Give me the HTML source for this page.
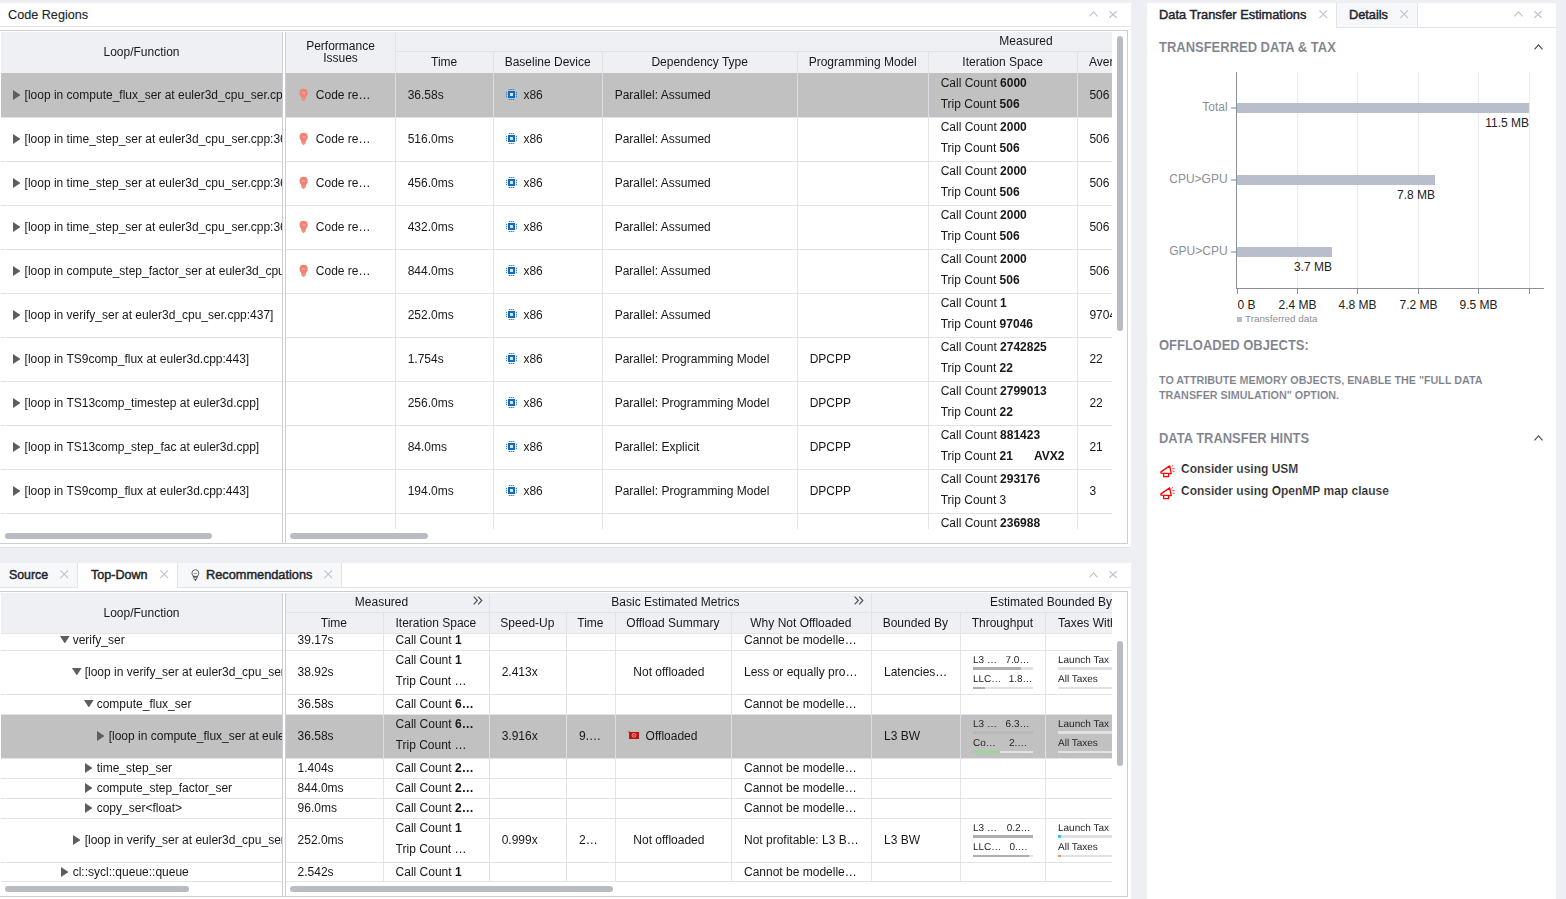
<!DOCTYPE html><html><head><meta charset="utf-8"><title>Advisor</title><style>
*{box-sizing:border-box;margin:0;padding:0}
html,body{width:1566px;height:899px;overflow:hidden;background:#edeff3;}
body{font-family:"Liberation Sans",sans-serif;font-size:12px;color:#181818;position:relative;line-height:1}
.a{position:absolute;white-space:nowrap;overflow:hidden}
.v{position:absolute;white-space:nowrap;overflow:visible}
.c{text-align:center}
.r{text-align:right}
b{font-weight:700}
.pan{position:absolute;background:#fff;overflow:hidden}
.ttl{font-weight:400;font-size:13px;color:#20232a;-webkit-text-stroke:0.45px #20232a;transform-origin:0 50%;overflow:visible}
.sec{font-weight:700;color:#7c808b;transform-origin:0 50%;overflow:visible;-webkit-text-stroke:0.12px #fff}
.g{position:absolute;will-change:transform;overflow:hidden;background:#fff}
  .s{font-size:10px;color:#242424;text-rendering:geometricPrecision}
svg{position:absolute;overflow:visible}
</style></head><body>
<div class="pan" style="left:0;top:3px;width:1131px;height:544px">
<div class="v ttl" style="left:8.2px;top:0px;height:24px;line-height:24px;font-size:13px;transform:scaleX(0.9722);-webkit-text-stroke-width:0.12px">Code Regions</div>
<div class="a" style="left:0px;top:23px;width:1131px;height:1px;background:#e2e4e9"></div>
<svg style="left:1089px;top:8px" width="9" height="6" viewBox="0 0 9 6"><path d="M0.5 5.3 L4.5 0.8 L8.5 5.3" fill="none" stroke="#c0c2cb" stroke-width="1.1"/></svg>
<svg style="left:1109px;top:8px" width="8" height="7" viewBox="0 0 8 7"><path d="M0.4 0.3 L7.6 6.7 M7.6 0.3 L0.4 6.7" fill="none" stroke="#c0c2cb" stroke-width="1.15"/></svg>
<div class="a" style="left:-1px;top:27px;width:1129px;height:514px;border:1px solid #cbced5;background:#fff"></div>
<div class="g" style="left:0;top:28px;width:1127px;height:512px">
<div class="a" style="left:1px;top:1px;width:281px;height:41px;background:#eef0f4"></div>
<div class="a" style="left:286px;top:1px;width:826px;height:41px;background:#eef0f4"></div>
<div class="a" style="left:282px;top:1px;width:1px;height:511px;background:#cbced5"></div>
<div class="a" style="left:285px;top:1px;width:1px;height:511px;background:#cbced5"></div>
<div class="a c" style="left:1px;top:1px;width:281px;height:41px;line-height:41px;">Loop/Function</div>
<div class="a" style="left:396px;top:20px;width:716px;height:1px;background:#e1e3e8"></div>
<div class="a" style="left:395px;top:1px;width:1px;height:41px;background:#e1e3e8"></div>
<div class="a" style="left:493px;top:21px;width:1px;height:21px;background:#e1e3e8"></div>
<div class="a" style="left:602px;top:21px;width:1px;height:21px;background:#e1e3e8"></div>
<div class="a" style="left:797px;top:21px;width:1px;height:21px;background:#e1e3e8"></div>
<div class="a" style="left:928px;top:21px;width:1px;height:21px;background:#e1e3e8"></div>
<div class="a" style="left:1077px;top:21px;width:1px;height:21px;background:#e1e3e8"></div>
<div class="a c" style="left:286px;top:9px;width:109px;height:30px;line-height:12px">Performance<br>Issues</div>
<div class="a c" style="left:999px;top:1px;width:54px;height:19px;line-height:19px;">Measured</div>
<div class="a c" style="left:395.7px;top:21px;width:97px;height:21px;line-height:21px;">Time</div>
<div class="a c" style="left:493.7px;top:21px;width:108px;height:21px;line-height:21px;">Baseline Device</div>
<div class="a c" style="left:602.7px;top:21px;width:194px;height:21px;line-height:21px;">Dependency Type</div>
<div class="a c" style="left:797.7px;top:21px;width:130px;height:21px;line-height:21px;">Programming Model</div>
<div class="a c" style="left:928.7px;top:21px;width:148px;height:21px;line-height:21px;">Iteration Space</div>
<div class="a" style="left:1089px;top:21px;width:23px;height:21px;line-height:21px;">Average</div>
<div class="a" style="left:1px;top:42px;width:281px;height:44px;background:#c1c1c1"></div>
<div class="a" style="left:286px;top:42px;width:826px;height:44px;background:#c1c1c1"></div>
<svg style="left:13px;top:59px" width="8" height="10" viewBox="0 0 8 10"><path d="M0 0 L6.8 4.4 Q7.4 5 6.8 5.6 L0 10 Z" fill="#5e5e5e"/></svg>
<div class="a" style="left:24.6px;top:42px;width:257.4px;height:44px;line-height:44px;">[loop in compute_flux_ser at euler3d_cpu_ser.cpp:1</div>
<svg style="left:299px;top:57px" width="10" height="14" viewBox="0 0 10 14"><circle cx="4.6" cy="4.9" r="4.1" fill="#f28373"/><rect x="2.1" y="7.6" width="5" height="2.4" fill="#f28373"/><rect x="2.6" y="9.8" width="4" height="2" fill="#f28373"/><path d="M2.9 11.6 L6.3 11.6 L4.6 13.3 Z" fill="#f28373"/><path d="M2.3 5.5 Q4.6 2.7 6.9 5.5 Z" fill="#f5aea3"/><rect x="2.2" y="9.5" width="4.8" height="0.5" fill="#f6a094"/><rect x="2.7" y="11.1" width="3.8" height="0.5" fill="#f6a094"/></svg>
<div class="a" style="left:315.8px;top:42px;width:78px;height:44px;line-height:44px;">Code re…</div>
<div class="a" style="left:407.7px;top:42px;width:84px;height:44px;line-height:44px;">36.58s</div>
<svg style="left:506px;top:58px" width="11" height="11" viewBox="0 0 11 11"><rect x="2" y="2" width="7" height="7" fill="#0a6bc9"/><rect x="4" y="4" width="3" height="3" fill="#e6dfdc"/><rect x="2.75" y="0" width="1.5" height="1" fill="#3a86d4"/><rect x="2.75" y="10" width="1.5" height="1" fill="#3a86d4"/><rect x="0" y="2.85" width="1" height="1.3" fill="#3a86d4"/><rect x="10" y="2.85" width="1" height="1.3" fill="#3a86d4"/><rect x="4.75" y="0" width="1.5" height="1" fill="#3a86d4"/><rect x="4.75" y="10" width="1.5" height="1" fill="#3a86d4"/><rect x="0" y="4.85" width="1" height="1.3" fill="#3a86d4"/><rect x="10" y="4.85" width="1" height="1.3" fill="#3a86d4"/><rect x="6.75" y="0" width="1.5" height="1" fill="#3a86d4"/><rect x="6.75" y="10" width="1.5" height="1" fill="#3a86d4"/><rect x="0" y="6.85" width="1" height="1.3" fill="#3a86d4"/><rect x="10" y="6.85" width="1" height="1.3" fill="#3a86d4"/></svg>
<div class="a" style="left:523.4px;top:42px;width:70px;height:44px;line-height:44px;">x86</div>
<div class="a" style="left:614.7px;top:42px;width:180px;height:44px;line-height:44px;">Parallel: Assumed</div>
<div class="a" style="left:809.7px;top:42px;width:110px;height:44px;line-height:44px;"></div>
<div class="a" style="left:940.7px;top:42px;width:135px;height:21px;line-height:21px;">Call Count <b>6000</b></div>
<div class="a" style="left:940.7px;top:63px;width:135px;height:21px;line-height:21px;">Trip Count <b>506</b></div>
<div class="a" style="left:1089.4px;top:42px;width:22.59999999999991px;height:44px;line-height:44px;">506</div>
<div class="a" style="left:1px;top:86px;width:281px;height:1px;background:#e1e3e8"></div>
<div class="a" style="left:286px;top:86px;width:826px;height:1px;background:#e1e3e8"></div>
<svg style="left:13px;top:103px" width="8" height="10" viewBox="0 0 8 10"><path d="M0 0 L6.8 4.4 Q7.4 5 6.8 5.6 L0 10 Z" fill="#5e5e5e"/></svg>
<div class="a" style="left:24.6px;top:86px;width:257.4px;height:44px;line-height:44px;">[loop in time_step_ser at euler3d_cpu_ser.cpp:364]</div>
<svg style="left:299px;top:101px" width="10" height="14" viewBox="0 0 10 14"><circle cx="4.6" cy="4.9" r="4.1" fill="#f28373"/><rect x="2.1" y="7.6" width="5" height="2.4" fill="#f28373"/><rect x="2.6" y="9.8" width="4" height="2" fill="#f28373"/><path d="M2.9 11.6 L6.3 11.6 L4.6 13.3 Z" fill="#f28373"/><path d="M2.3 5.5 Q4.6 2.7 6.9 5.5 Z" fill="#f5aea3"/><rect x="2.2" y="9.5" width="4.8" height="0.5" fill="#f6a094"/><rect x="2.7" y="11.1" width="3.8" height="0.5" fill="#f6a094"/></svg>
<div class="a" style="left:315.8px;top:86px;width:78px;height:44px;line-height:44px;">Code re…</div>
<div class="a" style="left:407.7px;top:86px;width:84px;height:44px;line-height:44px;">516.0ms</div>
<svg style="left:506px;top:102px" width="11" height="11" viewBox="0 0 11 11"><rect x="2" y="2" width="7" height="7" fill="#0a6bc9"/><rect x="4" y="4" width="3" height="3" fill="#e6dfdc"/><rect x="2.75" y="0" width="1.5" height="1" fill="#3a86d4"/><rect x="2.75" y="10" width="1.5" height="1" fill="#3a86d4"/><rect x="0" y="2.85" width="1" height="1.3" fill="#3a86d4"/><rect x="10" y="2.85" width="1" height="1.3" fill="#3a86d4"/><rect x="4.75" y="0" width="1.5" height="1" fill="#3a86d4"/><rect x="4.75" y="10" width="1.5" height="1" fill="#3a86d4"/><rect x="0" y="4.85" width="1" height="1.3" fill="#3a86d4"/><rect x="10" y="4.85" width="1" height="1.3" fill="#3a86d4"/><rect x="6.75" y="0" width="1.5" height="1" fill="#3a86d4"/><rect x="6.75" y="10" width="1.5" height="1" fill="#3a86d4"/><rect x="0" y="6.85" width="1" height="1.3" fill="#3a86d4"/><rect x="10" y="6.85" width="1" height="1.3" fill="#3a86d4"/></svg>
<div class="a" style="left:523.4px;top:86px;width:70px;height:44px;line-height:44px;">x86</div>
<div class="a" style="left:614.7px;top:86px;width:180px;height:44px;line-height:44px;">Parallel: Assumed</div>
<div class="a" style="left:809.7px;top:86px;width:110px;height:44px;line-height:44px;"></div>
<div class="a" style="left:940.7px;top:86px;width:135px;height:21px;line-height:21px;">Call Count <b>2000</b></div>
<div class="a" style="left:940.7px;top:107px;width:135px;height:21px;line-height:21px;">Trip Count <b>506</b></div>
<div class="a" style="left:1089.4px;top:86px;width:22.59999999999991px;height:44px;line-height:44px;">506</div>
<div class="a" style="left:1px;top:130px;width:281px;height:1px;background:#e1e3e8"></div>
<div class="a" style="left:286px;top:130px;width:826px;height:1px;background:#e1e3e8"></div>
<svg style="left:13px;top:147px" width="8" height="10" viewBox="0 0 8 10"><path d="M0 0 L6.8 4.4 Q7.4 5 6.8 5.6 L0 10 Z" fill="#5e5e5e"/></svg>
<div class="a" style="left:24.6px;top:130px;width:257.4px;height:44px;line-height:44px;">[loop in time_step_ser at euler3d_cpu_ser.cpp:364]</div>
<svg style="left:299px;top:145px" width="10" height="14" viewBox="0 0 10 14"><circle cx="4.6" cy="4.9" r="4.1" fill="#f28373"/><rect x="2.1" y="7.6" width="5" height="2.4" fill="#f28373"/><rect x="2.6" y="9.8" width="4" height="2" fill="#f28373"/><path d="M2.9 11.6 L6.3 11.6 L4.6 13.3 Z" fill="#f28373"/><path d="M2.3 5.5 Q4.6 2.7 6.9 5.5 Z" fill="#f5aea3"/><rect x="2.2" y="9.5" width="4.8" height="0.5" fill="#f6a094"/><rect x="2.7" y="11.1" width="3.8" height="0.5" fill="#f6a094"/></svg>
<div class="a" style="left:315.8px;top:130px;width:78px;height:44px;line-height:44px;">Code re…</div>
<div class="a" style="left:407.7px;top:130px;width:84px;height:44px;line-height:44px;">456.0ms</div>
<svg style="left:506px;top:146px" width="11" height="11" viewBox="0 0 11 11"><rect x="2" y="2" width="7" height="7" fill="#0a6bc9"/><rect x="4" y="4" width="3" height="3" fill="#e6dfdc"/><rect x="2.75" y="0" width="1.5" height="1" fill="#3a86d4"/><rect x="2.75" y="10" width="1.5" height="1" fill="#3a86d4"/><rect x="0" y="2.85" width="1" height="1.3" fill="#3a86d4"/><rect x="10" y="2.85" width="1" height="1.3" fill="#3a86d4"/><rect x="4.75" y="0" width="1.5" height="1" fill="#3a86d4"/><rect x="4.75" y="10" width="1.5" height="1" fill="#3a86d4"/><rect x="0" y="4.85" width="1" height="1.3" fill="#3a86d4"/><rect x="10" y="4.85" width="1" height="1.3" fill="#3a86d4"/><rect x="6.75" y="0" width="1.5" height="1" fill="#3a86d4"/><rect x="6.75" y="10" width="1.5" height="1" fill="#3a86d4"/><rect x="0" y="6.85" width="1" height="1.3" fill="#3a86d4"/><rect x="10" y="6.85" width="1" height="1.3" fill="#3a86d4"/></svg>
<div class="a" style="left:523.4px;top:130px;width:70px;height:44px;line-height:44px;">x86</div>
<div class="a" style="left:614.7px;top:130px;width:180px;height:44px;line-height:44px;">Parallel: Assumed</div>
<div class="a" style="left:809.7px;top:130px;width:110px;height:44px;line-height:44px;"></div>
<div class="a" style="left:940.7px;top:130px;width:135px;height:21px;line-height:21px;">Call Count <b>2000</b></div>
<div class="a" style="left:940.7px;top:151px;width:135px;height:21px;line-height:21px;">Trip Count <b>506</b></div>
<div class="a" style="left:1089.4px;top:130px;width:22.59999999999991px;height:44px;line-height:44px;">506</div>
<div class="a" style="left:1px;top:174px;width:281px;height:1px;background:#e1e3e8"></div>
<div class="a" style="left:286px;top:174px;width:826px;height:1px;background:#e1e3e8"></div>
<svg style="left:13px;top:191px" width="8" height="10" viewBox="0 0 8 10"><path d="M0 0 L6.8 4.4 Q7.4 5 6.8 5.6 L0 10 Z" fill="#5e5e5e"/></svg>
<div class="a" style="left:24.6px;top:174px;width:257.4px;height:44px;line-height:44px;">[loop in time_step_ser at euler3d_cpu_ser.cpp:364]</div>
<svg style="left:299px;top:189px" width="10" height="14" viewBox="0 0 10 14"><circle cx="4.6" cy="4.9" r="4.1" fill="#f28373"/><rect x="2.1" y="7.6" width="5" height="2.4" fill="#f28373"/><rect x="2.6" y="9.8" width="4" height="2" fill="#f28373"/><path d="M2.9 11.6 L6.3 11.6 L4.6 13.3 Z" fill="#f28373"/><path d="M2.3 5.5 Q4.6 2.7 6.9 5.5 Z" fill="#f5aea3"/><rect x="2.2" y="9.5" width="4.8" height="0.5" fill="#f6a094"/><rect x="2.7" y="11.1" width="3.8" height="0.5" fill="#f6a094"/></svg>
<div class="a" style="left:315.8px;top:174px;width:78px;height:44px;line-height:44px;">Code re…</div>
<div class="a" style="left:407.7px;top:174px;width:84px;height:44px;line-height:44px;">432.0ms</div>
<svg style="left:506px;top:190px" width="11" height="11" viewBox="0 0 11 11"><rect x="2" y="2" width="7" height="7" fill="#0a6bc9"/><rect x="4" y="4" width="3" height="3" fill="#e6dfdc"/><rect x="2.75" y="0" width="1.5" height="1" fill="#3a86d4"/><rect x="2.75" y="10" width="1.5" height="1" fill="#3a86d4"/><rect x="0" y="2.85" width="1" height="1.3" fill="#3a86d4"/><rect x="10" y="2.85" width="1" height="1.3" fill="#3a86d4"/><rect x="4.75" y="0" width="1.5" height="1" fill="#3a86d4"/><rect x="4.75" y="10" width="1.5" height="1" fill="#3a86d4"/><rect x="0" y="4.85" width="1" height="1.3" fill="#3a86d4"/><rect x="10" y="4.85" width="1" height="1.3" fill="#3a86d4"/><rect x="6.75" y="0" width="1.5" height="1" fill="#3a86d4"/><rect x="6.75" y="10" width="1.5" height="1" fill="#3a86d4"/><rect x="0" y="6.85" width="1" height="1.3" fill="#3a86d4"/><rect x="10" y="6.85" width="1" height="1.3" fill="#3a86d4"/></svg>
<div class="a" style="left:523.4px;top:174px;width:70px;height:44px;line-height:44px;">x86</div>
<div class="a" style="left:614.7px;top:174px;width:180px;height:44px;line-height:44px;">Parallel: Assumed</div>
<div class="a" style="left:809.7px;top:174px;width:110px;height:44px;line-height:44px;"></div>
<div class="a" style="left:940.7px;top:174px;width:135px;height:21px;line-height:21px;">Call Count <b>2000</b></div>
<div class="a" style="left:940.7px;top:195px;width:135px;height:21px;line-height:21px;">Trip Count <b>506</b></div>
<div class="a" style="left:1089.4px;top:174px;width:22.59999999999991px;height:44px;line-height:44px;">506</div>
<div class="a" style="left:1px;top:218px;width:281px;height:1px;background:#e1e3e8"></div>
<div class="a" style="left:286px;top:218px;width:826px;height:1px;background:#e1e3e8"></div>
<svg style="left:13px;top:235px" width="8" height="10" viewBox="0 0 8 10"><path d="M0 0 L6.8 4.4 Q7.4 5 6.8 5.6 L0 10 Z" fill="#5e5e5e"/></svg>
<div class="a" style="left:24.6px;top:218px;width:257.4px;height:44px;line-height:44px;">[loop in compute_step_factor_ser at euler3d_cpu_ser.cpp]</div>
<svg style="left:299px;top:233px" width="10" height="14" viewBox="0 0 10 14"><circle cx="4.6" cy="4.9" r="4.1" fill="#f28373"/><rect x="2.1" y="7.6" width="5" height="2.4" fill="#f28373"/><rect x="2.6" y="9.8" width="4" height="2" fill="#f28373"/><path d="M2.9 11.6 L6.3 11.6 L4.6 13.3 Z" fill="#f28373"/><path d="M2.3 5.5 Q4.6 2.7 6.9 5.5 Z" fill="#f5aea3"/><rect x="2.2" y="9.5" width="4.8" height="0.5" fill="#f6a094"/><rect x="2.7" y="11.1" width="3.8" height="0.5" fill="#f6a094"/></svg>
<div class="a" style="left:315.8px;top:218px;width:78px;height:44px;line-height:44px;">Code re…</div>
<div class="a" style="left:407.7px;top:218px;width:84px;height:44px;line-height:44px;">844.0ms</div>
<svg style="left:506px;top:234px" width="11" height="11" viewBox="0 0 11 11"><rect x="2" y="2" width="7" height="7" fill="#0a6bc9"/><rect x="4" y="4" width="3" height="3" fill="#e6dfdc"/><rect x="2.75" y="0" width="1.5" height="1" fill="#3a86d4"/><rect x="2.75" y="10" width="1.5" height="1" fill="#3a86d4"/><rect x="0" y="2.85" width="1" height="1.3" fill="#3a86d4"/><rect x="10" y="2.85" width="1" height="1.3" fill="#3a86d4"/><rect x="4.75" y="0" width="1.5" height="1" fill="#3a86d4"/><rect x="4.75" y="10" width="1.5" height="1" fill="#3a86d4"/><rect x="0" y="4.85" width="1" height="1.3" fill="#3a86d4"/><rect x="10" y="4.85" width="1" height="1.3" fill="#3a86d4"/><rect x="6.75" y="0" width="1.5" height="1" fill="#3a86d4"/><rect x="6.75" y="10" width="1.5" height="1" fill="#3a86d4"/><rect x="0" y="6.85" width="1" height="1.3" fill="#3a86d4"/><rect x="10" y="6.85" width="1" height="1.3" fill="#3a86d4"/></svg>
<div class="a" style="left:523.4px;top:218px;width:70px;height:44px;line-height:44px;">x86</div>
<div class="a" style="left:614.7px;top:218px;width:180px;height:44px;line-height:44px;">Parallel: Assumed</div>
<div class="a" style="left:809.7px;top:218px;width:110px;height:44px;line-height:44px;"></div>
<div class="a" style="left:940.7px;top:218px;width:135px;height:21px;line-height:21px;">Call Count <b>2000</b></div>
<div class="a" style="left:940.7px;top:239px;width:135px;height:21px;line-height:21px;">Trip Count <b>506</b></div>
<div class="a" style="left:1089.4px;top:218px;width:22.59999999999991px;height:44px;line-height:44px;">506</div>
<div class="a" style="left:1px;top:262px;width:281px;height:1px;background:#e1e3e8"></div>
<div class="a" style="left:286px;top:262px;width:826px;height:1px;background:#e1e3e8"></div>
<svg style="left:13px;top:279px" width="8" height="10" viewBox="0 0 8 10"><path d="M0 0 L6.8 4.4 Q7.4 5 6.8 5.6 L0 10 Z" fill="#5e5e5e"/></svg>
<div class="a" style="left:24.6px;top:262px;width:257.4px;height:44px;line-height:44px;">[loop in verify_ser at euler3d_cpu_ser.cpp:437]</div>
<div class="a" style="left:407.7px;top:262px;width:84px;height:44px;line-height:44px;">252.0ms</div>
<svg style="left:506px;top:278px" width="11" height="11" viewBox="0 0 11 11"><rect x="2" y="2" width="7" height="7" fill="#0a6bc9"/><rect x="4" y="4" width="3" height="3" fill="#e6dfdc"/><rect x="2.75" y="0" width="1.5" height="1" fill="#3a86d4"/><rect x="2.75" y="10" width="1.5" height="1" fill="#3a86d4"/><rect x="0" y="2.85" width="1" height="1.3" fill="#3a86d4"/><rect x="10" y="2.85" width="1" height="1.3" fill="#3a86d4"/><rect x="4.75" y="0" width="1.5" height="1" fill="#3a86d4"/><rect x="4.75" y="10" width="1.5" height="1" fill="#3a86d4"/><rect x="0" y="4.85" width="1" height="1.3" fill="#3a86d4"/><rect x="10" y="4.85" width="1" height="1.3" fill="#3a86d4"/><rect x="6.75" y="0" width="1.5" height="1" fill="#3a86d4"/><rect x="6.75" y="10" width="1.5" height="1" fill="#3a86d4"/><rect x="0" y="6.85" width="1" height="1.3" fill="#3a86d4"/><rect x="10" y="6.85" width="1" height="1.3" fill="#3a86d4"/></svg>
<div class="a" style="left:523.4px;top:262px;width:70px;height:44px;line-height:44px;">x86</div>
<div class="a" style="left:614.7px;top:262px;width:180px;height:44px;line-height:44px;">Parallel: Assumed</div>
<div class="a" style="left:809.7px;top:262px;width:110px;height:44px;line-height:44px;"></div>
<div class="a" style="left:940.7px;top:262px;width:135px;height:21px;line-height:21px;">Call Count <b>1</b></div>
<div class="a" style="left:940.7px;top:283px;width:135px;height:21px;line-height:21px;">Trip Count <b>97046</b></div>
<div class="a" style="left:1089.4px;top:262px;width:22.59999999999991px;height:44px;line-height:44px;">97046</div>
<div class="a" style="left:1px;top:306px;width:281px;height:1px;background:#e1e3e8"></div>
<div class="a" style="left:286px;top:306px;width:826px;height:1px;background:#e1e3e8"></div>
<svg style="left:13px;top:323px" width="8" height="10" viewBox="0 0 8 10"><path d="M0 0 L6.8 4.4 Q7.4 5 6.8 5.6 L0 10 Z" fill="#5e5e5e"/></svg>
<div class="a" style="left:24.6px;top:306px;width:257.4px;height:44px;line-height:44px;">[loop in TS9comp_flux at euler3d.cpp:443]</div>
<div class="a" style="left:407.7px;top:306px;width:84px;height:44px;line-height:44px;">1.754s</div>
<svg style="left:506px;top:322px" width="11" height="11" viewBox="0 0 11 11"><rect x="2" y="2" width="7" height="7" fill="#0a6bc9"/><rect x="4" y="4" width="3" height="3" fill="#e6dfdc"/><rect x="2.75" y="0" width="1.5" height="1" fill="#3a86d4"/><rect x="2.75" y="10" width="1.5" height="1" fill="#3a86d4"/><rect x="0" y="2.85" width="1" height="1.3" fill="#3a86d4"/><rect x="10" y="2.85" width="1" height="1.3" fill="#3a86d4"/><rect x="4.75" y="0" width="1.5" height="1" fill="#3a86d4"/><rect x="4.75" y="10" width="1.5" height="1" fill="#3a86d4"/><rect x="0" y="4.85" width="1" height="1.3" fill="#3a86d4"/><rect x="10" y="4.85" width="1" height="1.3" fill="#3a86d4"/><rect x="6.75" y="0" width="1.5" height="1" fill="#3a86d4"/><rect x="6.75" y="10" width="1.5" height="1" fill="#3a86d4"/><rect x="0" y="6.85" width="1" height="1.3" fill="#3a86d4"/><rect x="10" y="6.85" width="1" height="1.3" fill="#3a86d4"/></svg>
<div class="a" style="left:523.4px;top:306px;width:70px;height:44px;line-height:44px;">x86</div>
<div class="a" style="left:614.7px;top:306px;width:180px;height:44px;line-height:44px;">Parallel: Programming Model</div>
<div class="a" style="left:809.7px;top:306px;width:110px;height:44px;line-height:44px;">DPCPP</div>
<div class="a" style="left:940.7px;top:306px;width:135px;height:21px;line-height:21px;">Call Count <b>2742825</b></div>
<div class="a" style="left:940.7px;top:327px;width:135px;height:21px;line-height:21px;">Trip Count <b>22</b></div>
<div class="a" style="left:1089.4px;top:306px;width:22.59999999999991px;height:44px;line-height:44px;">22</div>
<div class="a" style="left:1px;top:350px;width:281px;height:1px;background:#e1e3e8"></div>
<div class="a" style="left:286px;top:350px;width:826px;height:1px;background:#e1e3e8"></div>
<svg style="left:13px;top:367px" width="8" height="10" viewBox="0 0 8 10"><path d="M0 0 L6.8 4.4 Q7.4 5 6.8 5.6 L0 10 Z" fill="#5e5e5e"/></svg>
<div class="a" style="left:24.6px;top:350px;width:257.4px;height:44px;line-height:44px;">[loop in TS13comp_timestep at euler3d.cpp]</div>
<div class="a" style="left:407.7px;top:350px;width:84px;height:44px;line-height:44px;">256.0ms</div>
<svg style="left:506px;top:366px" width="11" height="11" viewBox="0 0 11 11"><rect x="2" y="2" width="7" height="7" fill="#0a6bc9"/><rect x="4" y="4" width="3" height="3" fill="#e6dfdc"/><rect x="2.75" y="0" width="1.5" height="1" fill="#3a86d4"/><rect x="2.75" y="10" width="1.5" height="1" fill="#3a86d4"/><rect x="0" y="2.85" width="1" height="1.3" fill="#3a86d4"/><rect x="10" y="2.85" width="1" height="1.3" fill="#3a86d4"/><rect x="4.75" y="0" width="1.5" height="1" fill="#3a86d4"/><rect x="4.75" y="10" width="1.5" height="1" fill="#3a86d4"/><rect x="0" y="4.85" width="1" height="1.3" fill="#3a86d4"/><rect x="10" y="4.85" width="1" height="1.3" fill="#3a86d4"/><rect x="6.75" y="0" width="1.5" height="1" fill="#3a86d4"/><rect x="6.75" y="10" width="1.5" height="1" fill="#3a86d4"/><rect x="0" y="6.85" width="1" height="1.3" fill="#3a86d4"/><rect x="10" y="6.85" width="1" height="1.3" fill="#3a86d4"/></svg>
<div class="a" style="left:523.4px;top:350px;width:70px;height:44px;line-height:44px;">x86</div>
<div class="a" style="left:614.7px;top:350px;width:180px;height:44px;line-height:44px;">Parallel: Programming Model</div>
<div class="a" style="left:809.7px;top:350px;width:110px;height:44px;line-height:44px;">DPCPP</div>
<div class="a" style="left:940.7px;top:350px;width:135px;height:21px;line-height:21px;">Call Count <b>2799013</b></div>
<div class="a" style="left:940.7px;top:371px;width:135px;height:21px;line-height:21px;">Trip Count <b>22</b></div>
<div class="a" style="left:1089.4px;top:350px;width:22.59999999999991px;height:44px;line-height:44px;">22</div>
<div class="a" style="left:1px;top:394px;width:281px;height:1px;background:#e1e3e8"></div>
<div class="a" style="left:286px;top:394px;width:826px;height:1px;background:#e1e3e8"></div>
<svg style="left:13px;top:411px" width="8" height="10" viewBox="0 0 8 10"><path d="M0 0 L6.8 4.4 Q7.4 5 6.8 5.6 L0 10 Z" fill="#5e5e5e"/></svg>
<div class="a" style="left:24.6px;top:394px;width:257.4px;height:44px;line-height:44px;">[loop in TS13comp_step_fac at euler3d.cpp]</div>
<div class="a" style="left:407.7px;top:394px;width:84px;height:44px;line-height:44px;">84.0ms</div>
<svg style="left:506px;top:410px" width="11" height="11" viewBox="0 0 11 11"><rect x="2" y="2" width="7" height="7" fill="#0a6bc9"/><rect x="4" y="4" width="3" height="3" fill="#e6dfdc"/><rect x="2.75" y="0" width="1.5" height="1" fill="#3a86d4"/><rect x="2.75" y="10" width="1.5" height="1" fill="#3a86d4"/><rect x="0" y="2.85" width="1" height="1.3" fill="#3a86d4"/><rect x="10" y="2.85" width="1" height="1.3" fill="#3a86d4"/><rect x="4.75" y="0" width="1.5" height="1" fill="#3a86d4"/><rect x="4.75" y="10" width="1.5" height="1" fill="#3a86d4"/><rect x="0" y="4.85" width="1" height="1.3" fill="#3a86d4"/><rect x="10" y="4.85" width="1" height="1.3" fill="#3a86d4"/><rect x="6.75" y="0" width="1.5" height="1" fill="#3a86d4"/><rect x="6.75" y="10" width="1.5" height="1" fill="#3a86d4"/><rect x="0" y="6.85" width="1" height="1.3" fill="#3a86d4"/><rect x="10" y="6.85" width="1" height="1.3" fill="#3a86d4"/></svg>
<div class="a" style="left:523.4px;top:394px;width:70px;height:44px;line-height:44px;">x86</div>
<div class="a" style="left:614.7px;top:394px;width:180px;height:44px;line-height:44px;">Parallel: Explicit</div>
<div class="a" style="left:809.7px;top:394px;width:110px;height:44px;line-height:44px;">DPCPP</div>
<div class="a" style="left:940.7px;top:394px;width:135px;height:21px;line-height:21px;">Call Count <b>881423</b></div>
<div class="a" style="left:940.7px;top:415px;width:135px;height:21px;line-height:21px;">Trip Count <b>21</b></div>
<div class="a" style="left:1034px;top:415px;width:40px;height:21px;line-height:21px;"><b>AVX2</b></div>
<div class="a" style="left:1089.4px;top:394px;width:22.59999999999991px;height:44px;line-height:44px;">21</div>
<div class="a" style="left:1px;top:438px;width:281px;height:1px;background:#e1e3e8"></div>
<div class="a" style="left:286px;top:438px;width:826px;height:1px;background:#e1e3e8"></div>
<svg style="left:13px;top:455px" width="8" height="10" viewBox="0 0 8 10"><path d="M0 0 L6.8 4.4 Q7.4 5 6.8 5.6 L0 10 Z" fill="#5e5e5e"/></svg>
<div class="a" style="left:24.6px;top:438px;width:257.4px;height:44px;line-height:44px;">[loop in TS9comp_flux at euler3d.cpp:443]</div>
<div class="a" style="left:407.7px;top:438px;width:84px;height:44px;line-height:44px;">194.0ms</div>
<svg style="left:506px;top:454px" width="11" height="11" viewBox="0 0 11 11"><rect x="2" y="2" width="7" height="7" fill="#0a6bc9"/><rect x="4" y="4" width="3" height="3" fill="#e6dfdc"/><rect x="2.75" y="0" width="1.5" height="1" fill="#3a86d4"/><rect x="2.75" y="10" width="1.5" height="1" fill="#3a86d4"/><rect x="0" y="2.85" width="1" height="1.3" fill="#3a86d4"/><rect x="10" y="2.85" width="1" height="1.3" fill="#3a86d4"/><rect x="4.75" y="0" width="1.5" height="1" fill="#3a86d4"/><rect x="4.75" y="10" width="1.5" height="1" fill="#3a86d4"/><rect x="0" y="4.85" width="1" height="1.3" fill="#3a86d4"/><rect x="10" y="4.85" width="1" height="1.3" fill="#3a86d4"/><rect x="6.75" y="0" width="1.5" height="1" fill="#3a86d4"/><rect x="6.75" y="10" width="1.5" height="1" fill="#3a86d4"/><rect x="0" y="6.85" width="1" height="1.3" fill="#3a86d4"/><rect x="10" y="6.85" width="1" height="1.3" fill="#3a86d4"/></svg>
<div class="a" style="left:523.4px;top:438px;width:70px;height:44px;line-height:44px;">x86</div>
<div class="a" style="left:614.7px;top:438px;width:180px;height:44px;line-height:44px;">Parallel: Programming Model</div>
<div class="a" style="left:809.7px;top:438px;width:110px;height:44px;line-height:44px;">DPCPP</div>
<div class="a" style="left:940.7px;top:438px;width:135px;height:21px;line-height:21px;">Call Count <b>293176</b></div>
<div class="a" style="left:940.7px;top:459px;width:135px;height:21px;line-height:21px;">Trip Count 3</div>
<div class="a" style="left:1089.4px;top:438px;width:22.59999999999991px;height:44px;line-height:44px;">3</div>
<div class="a" style="left:1px;top:482px;width:281px;height:1px;background:#e1e3e8"></div>
<div class="a" style="left:286px;top:482px;width:826px;height:1px;background:#e1e3e8"></div>
<div class="a" style="left:940.7px;top:482px;width:135px;height:21px;line-height:21px;">Call Count <b>236988</b></div>
<div class="a" style="left:395px;top:86px;width:1px;height:412px;background:#e1e3e8"></div>
<div class="a" style="left:493px;top:86px;width:1px;height:412px;background:#e1e3e8"></div>
<div class="a" style="left:602px;top:86px;width:1px;height:412px;background:#e1e3e8"></div>
<div class="a" style="left:797px;top:86px;width:1px;height:412px;background:#e1e3e8"></div>
<div class="a" style="left:928px;top:86px;width:1px;height:412px;background:#e1e3e8"></div>
<div class="a" style="left:1077px;top:86px;width:1px;height:412px;background:#e1e3e8"></div>
<div class="a" style="left:395px;top:42px;width:1px;height:44px;background:#dcdee3"></div>
<div class="a" style="left:493px;top:42px;width:1px;height:44px;background:#dcdee3"></div>
<div class="a" style="left:602px;top:42px;width:1px;height:44px;background:#dcdee3"></div>
<div class="a" style="left:797px;top:42px;width:1px;height:44px;background:#dcdee3"></div>
<div class="a" style="left:928px;top:42px;width:1px;height:44px;background:#dcdee3"></div>
<div class="a" style="left:1077px;top:42px;width:1px;height:44px;background:#dcdee3"></div>
<div class="a" style="left:1px;top:498px;width:281px;height:14px;background:#fff"></div>
<div class="a" style="left:286px;top:498px;width:840px;height:14px;background:#fff"></div>
<div class="a" style="left:5px;top:502px;width:207px;height:6px;background:#b9bcc3;border-radius:3px"></div>
<div class="a" style="left:290px;top:502px;width:138px;height:6px;background:#b9bcc3;border-radius:3px"></div>
<div class="a" style="left:1117px;top:5px;width:6px;height:295px;background:#b9bcc3;border-radius:3px"></div>
</div>
</div>
<div class="a" style="left:0px;top:547px;width:1131px;height:1px;background:#e2e4e9"></div>
<div class="pan" style="left:0;top:563px;width:1131px;height:336px">
<div class="a" style="left:0px;top:0px;width:77px;height:24px;background:#f7f8fa"></div>
<div class="a" style="left:77px;top:0px;width:1px;height:25px;background:#e2e4e9"></div>
<div class="a" style="left:177px;top:0px;width:1px;height:25px;background:#e2e4e9"></div>
<div class="a" style="left:178px;top:0px;width:163px;height:24px;background:#f7f8fa"></div>
<div class="a" style="left:341px;top:0px;width:1px;height:25px;background:#e2e4e9"></div>
<div class="a" style="left:0px;top:24px;width:78px;height:1px;background:#e2e4e9"></div>
<div class="a" style="left:177px;top:24px;width:954px;height:1px;background:#e2e4e9"></div>
<div class="v ttl" style="left:9.2px;top:0px;height:24px;line-height:24px;font-size:13px;transform:scaleX(0.9492);">Source</div>
<svg style="left:60.4px;top:7px" width="8.5" height="8.5" viewBox="0 0 8.5 8.5"><path d="M0.4 0.3 L8.1 8.2 M8.1 0.3 L0.4 8.2" fill="none" stroke="#c0c2cb" stroke-width="1.1"/></svg>
<div class="v ttl" style="left:90.6px;top:0px;height:24px;line-height:24px;font-size:13px;transform:scaleX(0.9671);">Top-Down</div>
<svg style="left:159.8px;top:7px" width="8.5" height="8.5" viewBox="0 0 8.5 8.5"><path d="M0.4 0.3 L8.1 8.2 M8.1 0.3 L0.4 8.2" fill="none" stroke="#c0c2cb" stroke-width="1.1"/></svg>
<svg style="left:191px;top:5.600000000000023px" width="9" height="13" viewBox="0 0 9 13"><circle cx="4.4" cy="4.2" r="3.5" fill="none" stroke="#5a5560" stroke-width="0.9"/><path d="M2.2 7.0 L3.4 10.2 M6.6 7.0 L5.4 10.2" fill="none" stroke="#5a5560" stroke-width="0.9"/><path d="M2.5 8.0 L6.3 8.0" stroke="#3a3a40" stroke-width="1"/><path d="M3.2 10 L5.6 10 L4.4 12.2 Z" fill="#2c2c33"/><path d="M2.6 4.6 L6.2 4.6" fill="none" stroke="#9a9a8a" stroke-width="1"/></svg>
<div class="v ttl" style="left:205.5px;top:0px;height:24px;line-height:24px;font-size:13px;transform:scaleX(0.9816);">Recommendations</div>
<svg style="left:323.6px;top:7px" width="8.5" height="8.5" viewBox="0 0 8.5 8.5"><path d="M0.4 0.3 L8.1 8.2 M8.1 0.3 L0.4 8.2" fill="none" stroke="#c0c2cb" stroke-width="1.1"/></svg>
<svg style="left:1089.2px;top:8.5px" width="9" height="6" viewBox="0 0 9 6"><path d="M0.5 5.3 L4.5 0.8 L8.5 5.3" fill="none" stroke="#c0c2cb" stroke-width="1.1"/></svg>
<svg style="left:1109px;top:8px" width="8" height="7" viewBox="0 0 8 7"><path d="M0.4 0.3 L7.6 6.7 M7.6 0.3 L0.4 6.7" fill="none" stroke="#c0c2cb" stroke-width="1.15"/></svg>
<div class="a" style="left:-1px;top:28px;width:1129px;height:306px;border:1px solid #cbced5;background:#fff"></div>
<div class="g" style="left:0;top:29px;width:1127px;height:304px">
<div class="a" style="left:1px;top:1px;width:281px;height:41px;background:#eef0f4"></div>
<div class="a" style="left:286px;top:1px;width:826px;height:41px;background:#eef0f4"></div>
<div class="a" style="left:282px;top:1px;width:1px;height:303px;background:#cbced5"></div>
<div class="a" style="left:285px;top:1px;width:1px;height:303px;background:#cbced5"></div>
<div class="a c" style="left:1px;top:1px;width:281px;height:41px;line-height:41px;">Loop/Function</div>
<div class="a" style="left:286px;top:20px;width:826px;height:1px;background:#e1e3e8"></div>
<div class="a" style="left:383px;top:21px;width:1px;height:21px;background:#e1e3e8"></div>
<div class="a" style="left:489px;top:1px;width:1px;height:41px;background:#e1e3e8"></div>
<div class="a" style="left:566px;top:21px;width:1px;height:21px;background:#e1e3e8"></div>
<div class="a" style="left:615px;top:21px;width:1px;height:21px;background:#e1e3e8"></div>
<div class="a" style="left:731px;top:21px;width:1px;height:21px;background:#e1e3e8"></div>
<div class="a" style="left:871px;top:1px;width:1px;height:41px;background:#e1e3e8"></div>
<div class="a" style="left:960px;top:21px;width:1px;height:21px;background:#e1e3e8"></div>
<div class="a" style="left:1045px;top:21px;width:1px;height:21px;background:#e1e3e8"></div>
<div class="a c" style="left:285.4px;top:21px;width:97px;height:21px;line-height:21px;">Time</div>
<div class="a c" style="left:383.4px;top:21px;width:105px;height:21px;line-height:21px;">Iteration Space</div>
<div class="a c" style="left:489.4px;top:21px;width:76px;height:21px;line-height:21px;">Speed-Up</div>
<div class="a c" style="left:566.4px;top:21px;width:48px;height:21px;line-height:21px;">Time</div>
<div class="a c" style="left:615.4px;top:21px;width:115px;height:21px;line-height:21px;">Offload Summary</div>
<div class="a c" style="left:731.4px;top:21px;width:139px;height:21px;line-height:21px;">Why Not Offloaded</div>
<div class="a c" style="left:871.4px;top:21px;width:88px;height:21px;line-height:21px;">Bounded By</div>
<div class="a c" style="left:960.4px;top:21px;width:84px;height:21px;line-height:21px;">Throughput</div>
<div class="a" style="left:1058px;top:21px;width:54px;height:21px;line-height:21px;">Taxes With</div>
<div class="a" style="left:1px;top:41px;width:281px;height:1px;background:#e4e6ea"></div>
<div class="a" style="left:286px;top:41px;width:826px;height:1px;background:#e4e6ea"></div>
<div class="a c" style="left:285.5px;top:1px;width:192px;height:19px;line-height:19px;">Measured</div>
<svg style="left:473px;top:4px" width="10" height="9" viewBox="0 0 10 9"><path d="M0.7 0.7 L4.3 4.5 L0.7 8.3 M5.2 0.7 L8.8 4.5 L5.2 8.3" fill="none" stroke="#4a4f5a" stroke-width="1.2"/></svg>
<div class="a c" style="left:489.4px;top:1px;width:372px;height:19px;line-height:19px;">Basic Estimated Metrics</div>
<svg style="left:854px;top:4px" width="10" height="9" viewBox="0 0 10 9"><path d="M0.7 0.7 L4.3 4.5 L0.7 8.3 M5.2 0.7 L8.8 4.5 L5.2 8.3" fill="none" stroke="#4a4f5a" stroke-width="1.2"/></svg>
<div class="a" style="left:990px;top:1px;width:122px;height:19px;line-height:19px;">Estimated Bounded By</div>
<div class="a" style="left:1px;top:58px;width:281px;height:1px;background:#e1e3e8"></div>
<div class="a" style="left:286px;top:58px;width:826px;height:1px;background:#e1e3e8"></div>
<svg style="left:59.7px;top:44.10000000000002px" width="10" height="8" viewBox="0 0 10 8"><path d="M0 0 L9.6 0 L5.3 6.7 Q4.8 7.3 4.3 6.7 Z" fill="#5e5e5e"/></svg>
<div class="a" style="left:72.7px;top:39px;width:209.3px;height:19px;line-height:19px;">verify_ser</div>
<div class="a" style="left:297.6px;top:39px;width:84px;height:19px;line-height:19px;">39.17s</div>
<div class="a" style="left:395.6px;top:39px;width:92px;height:19px;line-height:19px;">Call Count <b>1</b></div>
<div class="a" style="left:501.7px;top:39px;width:60px;height:19px;line-height:19px;"></div>
<div class="a" style="left:579px;top:39px;width:36px;height:19px;line-height:19px;"></div>
<div class="a" style="left:744px;top:39px;width:126px;height:19px;line-height:19px;">Cannot be modelle…</div>
<div class="a" style="left:884px;top:39px;width:76px;height:19px;line-height:19px;"></div>
<div class="a" style="left:1px;top:102px;width:281px;height:1px;background:#e1e3e8"></div>
<div class="a" style="left:286px;top:102px;width:826px;height:1px;background:#e1e3e8"></div>
<svg style="left:71.7px;top:76.10000000000002px" width="10" height="8" viewBox="0 0 10 8"><path d="M0 0 L9.6 0 L5.3 6.7 Q4.8 7.3 4.3 6.7 Z" fill="#5e5e5e"/></svg>
<div class="a" style="left:84.7px;top:59px;width:197.3px;height:43px;line-height:43px;">[loop in verify_ser at euler3d_cpu_ser.cpp:437]</div>
<div class="a" style="left:297.6px;top:59px;width:84px;height:43px;line-height:43px;">38.92s</div>
<div class="a" style="left:395.6px;top:58px;width:92px;height:21px;line-height:21px;">Call Count <b>1</b></div>
<div class="a" style="left:395.6px;top:79px;width:92px;height:21px;line-height:21px;">Trip Count …</div>
<div class="a" style="left:501.7px;top:59px;width:60px;height:43px;line-height:43px;">2.413x</div>
<div class="a" style="left:579px;top:59px;width:36px;height:43px;line-height:43px;"></div>
<div class="a" style="left:633.3px;top:59px;width:96px;height:43px;line-height:43px;">Not offloaded</div>
<div class="a" style="left:744px;top:59px;width:126px;height:43px;line-height:43px;">Less or equally pro…</div>
<div class="a" style="left:884px;top:59px;width:76px;height:43px;line-height:43px;">Latencies…</div>
<div class="a s" style="left:973px;top:62px;width:32px;height:13px;line-height:13px;">L3 …</div>
<div class="a s" style="left:1005.5px;top:62px;width:39.5px;height:13px;line-height:13px;">7.0…</div>
<div class="a" style="left:973px;top:75px;width:60px;height:3px;background:#dfe1e7"></div>
<div class="a" style="left:973px;top:75px;width:48px;height:3px;background:#afafb2"></div>
<div class="a s" style="left:973px;top:81px;width:32px;height:13px;line-height:13px;">LLC…</div>
<div class="a s" style="left:1008.7px;top:81px;width:36.299999999999955px;height:13px;line-height:13px;">1.8…</div>
<div class="a" style="left:973px;top:95px;width:60px;height:2px;background:#dfe1e7"></div>
<div class="a" style="left:973px;top:95px;width:12px;height:2px;background:#afafb2"></div>
<div class="a s" style="left:1058px;top:62px;width:54px;height:13px;line-height:13px;">Launch Tax</div>
<div class="a" style="left:1058px;top:75px;width:54px;height:3px;background:#dfe1e7"></div>
<div class="a s" style="left:1058px;top:81px;width:54px;height:13px;line-height:13px;">All Taxes</div>
<div class="a" style="left:1058px;top:95px;width:54px;height:2px;background:#dfe1e7"></div>
<div class="a" style="left:1px;top:122px;width:281px;height:1px;background:#e1e3e8"></div>
<div class="a" style="left:286px;top:122px;width:826px;height:1px;background:#e1e3e8"></div>
<svg style="left:83.7px;top:108.10000000000002px" width="10" height="8" viewBox="0 0 10 8"><path d="M0 0 L9.6 0 L5.3 6.7 Q4.8 7.3 4.3 6.7 Z" fill="#5e5e5e"/></svg>
<div class="a" style="left:96.7px;top:103px;width:185.3px;height:19px;line-height:19px;">compute_flux_ser</div>
<div class="a" style="left:297.6px;top:103px;width:84px;height:19px;line-height:19px;">36.58s</div>
<div class="a" style="left:395.6px;top:103px;width:92px;height:19px;line-height:19px;">Call Count <b>6…</b></div>
<div class="a" style="left:501.7px;top:103px;width:60px;height:19px;line-height:19px;"></div>
<div class="a" style="left:579px;top:103px;width:36px;height:19px;line-height:19px;"></div>
<div class="a" style="left:744px;top:103px;width:126px;height:19px;line-height:19px;">Cannot be modelle…</div>
<div class="a" style="left:884px;top:103px;width:76px;height:19px;line-height:19px;"></div>
<div class="a" style="left:1px;top:123px;width:281px;height:43px;background:#c1c1c1"></div>
<div class="a" style="left:286px;top:123px;width:826px;height:43px;background:#c1c1c1"></div>
<div class="a" style="left:1px;top:166px;width:281px;height:1px;background:#e1e3e8"></div>
<div class="a" style="left:286px;top:166px;width:826px;height:1px;background:#e1e3e8"></div>
<svg style="left:97px;top:139.0px" width="8" height="10" viewBox="0 0 8 10"><path d="M0 0 L6.8 4.4 Q7.4 5 6.8 5.6 L0 10 Z" fill="#5e5e5e"/></svg>
<div class="a" style="left:108.7px;top:123px;width:173.3px;height:43px;line-height:43px;">[loop in compute_flux_ser at euler3d_cpu_ser.cpp]</div>
<div class="a" style="left:297.6px;top:123px;width:84px;height:43px;line-height:43px;">36.58s</div>
<div class="a" style="left:395.6px;top:122px;width:92px;height:21px;line-height:21px;">Call Count <b>6…</b></div>
<div class="a" style="left:395.6px;top:143px;width:92px;height:21px;line-height:21px;">Trip Count …</div>
<div class="a" style="left:501.7px;top:123px;width:60px;height:43px;line-height:43px;">3.916x</div>
<div class="a" style="left:579px;top:123px;width:36px;height:43px;line-height:43px;">9.…</div>
<svg style="left:628px;top:139px" width="11" height="8" viewBox="0 0 11 8"><rect x="1" y="1" width="10" height="7" fill="#bf1313"/><rect x="0" y="0.5" width="2.2" height="0.9" fill="#c33a3a"/><circle cx="6" cy="4.3" r="1.9" fill="none" stroke="#e9c9c9" stroke-width="0.7"/><path d="M5.5 3.6 L6.8 4.3 L5.5 5 Z" fill="#e9c9c9"/></svg>
<div class="a" style="left:645.6px;top:123px;width:84px;height:43px;line-height:43px;">Offloaded</div>
<div class="a" style="left:744px;top:123px;width:126px;height:43px;line-height:43px;"></div>
<div class="a" style="left:884px;top:123px;width:76px;height:43px;line-height:43px;">L3 BW</div>
<div class="a s" style="left:973px;top:126px;width:32px;height:13px;line-height:13px;">L3 …</div>
<div class="a s" style="left:1005.6px;top:126px;width:39.39999999999998px;height:13px;line-height:13px;">6.3…</div>
<div class="a" style="left:973px;top:139px;width:60px;height:3px;background:#dfe1e7"></div>
<div class="a" style="left:973px;top:139px;width:60px;height:3px;background:#b9b9bc"></div>
<div class="a s" style="left:973px;top:145px;width:32px;height:13px;line-height:13px;">Co…</div>
<div class="a s" style="left:1009px;top:145px;width:36px;height:13px;line-height:13px;">2.…</div>
<div class="a" style="left:973px;top:159px;width:60px;height:2px;background:#dfe1e7"></div>
<div class="a" style="left:973px;top:159px;width:27px;height:2px;background:#8fdf8a"></div>
<div class="a s" style="left:1058px;top:126px;width:54px;height:13px;line-height:13px;">Launch Tax</div>
<div class="a" style="left:1058px;top:139px;width:54px;height:3px;background:#dfe1e7"></div>
<div class="a s" style="left:1058px;top:145px;width:54px;height:13px;line-height:13px;">All Taxes</div>
<div class="a" style="left:1058px;top:159px;width:54px;height:2px;background:#dfe1e7"></div>
<div class="a" style="left:1px;top:186px;width:281px;height:1px;background:#e1e3e8"></div>
<div class="a" style="left:286px;top:186px;width:826px;height:1px;background:#e1e3e8"></div>
<svg style="left:85px;top:171.0px" width="8" height="10" viewBox="0 0 8 10"><path d="M0 0 L6.8 4.4 Q7.4 5 6.8 5.6 L0 10 Z" fill="#5e5e5e"/></svg>
<div class="a" style="left:96.7px;top:167px;width:185.3px;height:19px;line-height:19px;">time_step_ser</div>
<div class="a" style="left:297.6px;top:167px;width:84px;height:19px;line-height:19px;">1.404s</div>
<div class="a" style="left:395.6px;top:167px;width:92px;height:19px;line-height:19px;">Call Count <b>2…</b></div>
<div class="a" style="left:501.7px;top:167px;width:60px;height:19px;line-height:19px;"></div>
<div class="a" style="left:579px;top:167px;width:36px;height:19px;line-height:19px;"></div>
<div class="a" style="left:744px;top:167px;width:126px;height:19px;line-height:19px;">Cannot be modelle…</div>
<div class="a" style="left:884px;top:167px;width:76px;height:19px;line-height:19px;"></div>
<div class="a" style="left:1px;top:206px;width:281px;height:1px;background:#e1e3e8"></div>
<div class="a" style="left:286px;top:206px;width:826px;height:1px;background:#e1e3e8"></div>
<svg style="left:85px;top:191.0px" width="8" height="10" viewBox="0 0 8 10"><path d="M0 0 L6.8 4.4 Q7.4 5 6.8 5.6 L0 10 Z" fill="#5e5e5e"/></svg>
<div class="a" style="left:96.7px;top:187px;width:185.3px;height:19px;line-height:19px;">compute_step_factor_ser</div>
<div class="a" style="left:297.6px;top:187px;width:84px;height:19px;line-height:19px;">844.0ms</div>
<div class="a" style="left:395.6px;top:187px;width:92px;height:19px;line-height:19px;">Call Count <b>2…</b></div>
<div class="a" style="left:501.7px;top:187px;width:60px;height:19px;line-height:19px;"></div>
<div class="a" style="left:579px;top:187px;width:36px;height:19px;line-height:19px;"></div>
<div class="a" style="left:744px;top:187px;width:126px;height:19px;line-height:19px;">Cannot be modelle…</div>
<div class="a" style="left:884px;top:187px;width:76px;height:19px;line-height:19px;"></div>
<div class="a" style="left:1px;top:226px;width:281px;height:1px;background:#e1e3e8"></div>
<div class="a" style="left:286px;top:226px;width:826px;height:1px;background:#e1e3e8"></div>
<svg style="left:85px;top:211.0px" width="8" height="10" viewBox="0 0 8 10"><path d="M0 0 L6.8 4.4 Q7.4 5 6.8 5.6 L0 10 Z" fill="#5e5e5e"/></svg>
<div class="a" style="left:96.7px;top:207px;width:185.3px;height:19px;line-height:19px;">copy_ser&lt;float&gt;</div>
<div class="a" style="left:297.6px;top:207px;width:84px;height:19px;line-height:19px;">96.0ms</div>
<div class="a" style="left:395.6px;top:207px;width:92px;height:19px;line-height:19px;">Call Count <b>2…</b></div>
<div class="a" style="left:501.7px;top:207px;width:60px;height:19px;line-height:19px;"></div>
<div class="a" style="left:579px;top:207px;width:36px;height:19px;line-height:19px;"></div>
<div class="a" style="left:744px;top:207px;width:126px;height:19px;line-height:19px;">Cannot be modelle…</div>
<div class="a" style="left:884px;top:207px;width:76px;height:19px;line-height:19px;"></div>
<div class="a" style="left:1px;top:270px;width:281px;height:1px;background:#e1e3e8"></div>
<div class="a" style="left:286px;top:270px;width:826px;height:1px;background:#e1e3e8"></div>
<svg style="left:73px;top:243.0px" width="8" height="10" viewBox="0 0 8 10"><path d="M0 0 L6.8 4.4 Q7.4 5 6.8 5.6 L0 10 Z" fill="#5e5e5e"/></svg>
<div class="a" style="left:84.7px;top:227px;width:197.3px;height:43px;line-height:43px;">[loop in verify_ser at euler3d_cpu_ser.cpp:437]</div>
<div class="a" style="left:297.6px;top:227px;width:84px;height:43px;line-height:43px;">252.0ms</div>
<div class="a" style="left:395.6px;top:226px;width:92px;height:21px;line-height:21px;">Call Count <b>1</b></div>
<div class="a" style="left:395.6px;top:247px;width:92px;height:21px;line-height:21px;">Trip Count …</div>
<div class="a" style="left:501.7px;top:227px;width:60px;height:43px;line-height:43px;">0.999x</div>
<div class="a" style="left:579px;top:227px;width:36px;height:43px;line-height:43px;">2…</div>
<div class="a" style="left:633.3px;top:227px;width:96px;height:43px;line-height:43px;">Not offloaded</div>
<div class="a" style="left:744px;top:227px;width:126px;height:43px;line-height:43px;">Not profitable: L3 B…</div>
<div class="a" style="left:884px;top:227px;width:76px;height:43px;line-height:43px;">L3 BW</div>
<div class="a s" style="left:973px;top:230px;width:32px;height:13px;line-height:13px;">L3 …</div>
<div class="a s" style="left:1006.7px;top:230px;width:38.299999999999955px;height:13px;line-height:13px;">0.2…</div>
<div class="a" style="left:973px;top:243px;width:60px;height:3px;background:#dfe1e7"></div>
<div class="a" style="left:973px;top:243px;width:60px;height:3px;background:#afafb2"></div>
<div class="a s" style="left:973px;top:249px;width:32px;height:13px;line-height:13px;">LLC…</div>
<div class="a s" style="left:1009.4px;top:249px;width:35.60000000000002px;height:13px;line-height:13px;">0.…</div>
<div class="a" style="left:973px;top:263px;width:60px;height:2px;background:#dfe1e7"></div>
<div class="a" style="left:973px;top:263px;width:56px;height:2px;background:#afafb2"></div>
<div class="a s" style="left:1058px;top:230px;width:54px;height:13px;line-height:13px;">Launch Tax</div>
<div class="a" style="left:1058px;top:243px;width:54px;height:3px;background:#dfe1e7"></div>
<div class="a" style="left:1058px;top:243px;width:3px;height:3px;background:#3bc4e2"></div>
<div class="a s" style="left:1058px;top:249px;width:54px;height:13px;line-height:13px;">All Taxes</div>
<div class="a" style="left:1058px;top:263px;width:54px;height:2px;background:#dfe1e7"></div>
<div class="a" style="left:1058px;top:263px;width:3px;height:2px;background:#e09a5c"></div>
<div class="a" style="left:1px;top:289px;width:281px;height:1px;background:#e1e3e8"></div>
<div class="a" style="left:286px;top:289px;width:826px;height:1px;background:#e1e3e8"></div>
<svg style="left:61px;top:274.5px" width="8" height="10" viewBox="0 0 8 10"><path d="M0 0 L6.8 4.4 Q7.4 5 6.8 5.6 L0 10 Z" fill="#5e5e5e"/></svg>
<div class="a" style="left:72.7px;top:271px;width:209.3px;height:18px;line-height:18px;">cl::sycl::queue::queue</div>
<div class="a" style="left:297.6px;top:271px;width:84px;height:18px;line-height:18px;">2.542s</div>
<div class="a" style="left:395.6px;top:271px;width:92px;height:18px;line-height:18px;">Call Count <b>1</b></div>
<div class="a" style="left:501.7px;top:271px;width:60px;height:18px;line-height:18px;"></div>
<div class="a" style="left:579px;top:271px;width:36px;height:18px;line-height:18px;"></div>
<div class="a" style="left:744px;top:271px;width:126px;height:18px;line-height:18px;">Cannot be modelle…</div>
<div class="a" style="left:884px;top:271px;width:76px;height:18px;line-height:18px;"></div>
<div class="a" style="left:383px;top:42px;width:1px;height:248px;background:#e1e3e8"></div>
<div class="a" style="left:489px;top:42px;width:1px;height:248px;background:#e1e3e8"></div>
<div class="a" style="left:566px;top:42px;width:1px;height:248px;background:#e1e3e8"></div>
<div class="a" style="left:615px;top:42px;width:1px;height:248px;background:#e1e3e8"></div>
<div class="a" style="left:731px;top:42px;width:1px;height:248px;background:#e1e3e8"></div>
<div class="a" style="left:871px;top:42px;width:1px;height:248px;background:#e1e3e8"></div>
<div class="a" style="left:960px;top:42px;width:1px;height:248px;background:#e1e3e8"></div>
<div class="a" style="left:1045px;top:42px;width:1px;height:248px;background:#e1e3e8"></div>
<div class="a" style="left:383px;top:123px;width:1px;height:43px;background:#dcdee3"></div>
<div class="a" style="left:489px;top:123px;width:1px;height:43px;background:#dcdee3"></div>
<div class="a" style="left:566px;top:123px;width:1px;height:43px;background:#dcdee3"></div>
<div class="a" style="left:615px;top:123px;width:1px;height:43px;background:#dcdee3"></div>
<div class="a" style="left:731px;top:123px;width:1px;height:43px;background:#dcdee3"></div>
<div class="a" style="left:871px;top:123px;width:1px;height:43px;background:#dcdee3"></div>
<div class="a" style="left:960px;top:123px;width:1px;height:43px;background:#dcdee3"></div>
<div class="a" style="left:1045px;top:123px;width:1px;height:43px;background:#dcdee3"></div>
<div class="a" style="left:5px;top:294px;width:184px;height:6px;background:#b9bcc3;border-radius:3px"></div>
<div class="a" style="left:290px;top:294px;width:323px;height:6px;background:#b9bcc3;border-radius:3px"></div>
<div class="a" style="left:1117px;top:49px;width:6px;height:125px;background:#b9bcc3;border-radius:3px"></div>
</div>
</div>
<div class="pan" style="left:1147px;top:3px;width:409px;height:896px">
<div class="a" style="left:189px;top:0px;width:1px;height:25px;background:#e2e4e9"></div>
<div class="a" style="left:190px;top:0px;width:80px;height:24px;background:#f7f8fa"></div>
<div class="a" style="left:270px;top:0px;width:1px;height:25px;background:#e2e4e9"></div>
<div class="a" style="left:189px;top:24px;width:220px;height:1px;background:#e2e4e9"></div>
<div class="v ttl" style="left:12.299999999999955px;top:0px;height:24px;line-height:24px;font-size:13px;transform:scaleX(0.9856);">Data Transfer Estimations</div>
<svg style="left:172px;top:7px" width="8.5" height="8.5" viewBox="0 0 8.5 8.5"><path d="M0.4 0.3 L8.1 8.2 M8.1 0.3 L0.4 8.2" fill="none" stroke="#c0c2cb" stroke-width="1.1"/></svg>
<div class="v ttl" style="left:202px;top:0px;height:24px;line-height:24px;font-size:13px;transform:scaleX(0.9814);">Details</div>
<svg style="left:252.5999999999999px;top:7px" width="8.5" height="8.5" viewBox="0 0 8.5 8.5"><path d="M0.4 0.3 L8.1 8.2 M8.1 0.3 L0.4 8.2" fill="none" stroke="#c0c2cb" stroke-width="1.1"/></svg>
<svg style="left:367px;top:8px" width="9" height="6" viewBox="0 0 9 6"><path d="M0.5 5.3 L4.5 0.8 L8.5 5.3" fill="none" stroke="#c0c2cb" stroke-width="1.1"/></svg>
<svg style="left:387px;top:8px" width="8" height="7" viewBox="0 0 8 7"><path d="M0.4 0.3 L7.6 6.7 M7.6 0.3 L0.4 6.7" fill="none" stroke="#c0c2cb" stroke-width="1.15"/></svg>
<div class="v sec" style="left:12.299999999999955px;top:34px;height:21px;line-height:21px;font-size:14px;transform:scaleX(0.9266);">TRANSFERRED DATA &amp; TAX</div>
<svg style="left:387px;top:41px" width="9" height="6" viewBox="0 0 9 6"><path d="M0.5 5.3 L4.5 0.8 L8.5 5.3" fill="none" stroke="#444a55" stroke-width="1.1"/></svg>
<div class="a" style="left:150px;top:69px;width:1px;height:216px;background:#ececf0"></div>
<div class="a" style="left:150px;top:286px;width:1px;height:5px;background:#8a8e99"></div>
<div class="a" style="left:210px;top:69px;width:1px;height:216px;background:#ececf0"></div>
<div class="a" style="left:210px;top:286px;width:1px;height:5px;background:#8a8e99"></div>
<div class="a" style="left:271px;top:69px;width:1px;height:216px;background:#ececf0"></div>
<div class="a" style="left:271px;top:286px;width:1px;height:5px;background:#8a8e99"></div>
<div class="a" style="left:331px;top:69px;width:1px;height:216px;background:#ececf0"></div>
<div class="a" style="left:331px;top:286px;width:1px;height:5px;background:#8a8e99"></div>
<div class="a" style="left:382px;top:69px;width:1px;height:216px;background:#ececf0"></div>
<div class="a" style="left:382px;top:286px;width:1px;height:5px;background:#8a8e99"></div>
<div class="a" style="left:89px;top:69px;width:1px;height:217px;background:#8a8e99"></div>
<div class="a" style="left:90px;top:286px;width:1px;height:5px;background:#8a8e99"></div>
<div class="a" style="left:89px;top:285px;width:308px;height:1px;background:#8a8e99"></div>
<div class="a" style="left:90px;top:100px;width:292px;height:10px;background:#b8becc"></div>
<div class="a" style="left:3px;top:96px;width:77.59999999999991px;height:16px;line-height:16px;text-align:right;color:#8a8e98">Total</div>
<div class="a" style="left:84px;top:104px;width:5px;height:2px;background:#bfc1c7"></div>
<div class="a" style="left:302px;top:112px;width:80px;height:16px;line-height:16px;text-align:right;color:#222">11.5 MB</div>
<div class="a" style="left:90px;top:172px;width:198px;height:10px;background:#b8becc"></div>
<div class="a" style="left:3px;top:168px;width:77.59999999999991px;height:16px;line-height:16px;text-align:right;color:#8a8e98">CPU&gt;GPU</div>
<div class="a" style="left:84px;top:176px;width:5px;height:2px;background:#bfc1c7"></div>
<div class="a" style="left:208px;top:184px;width:80px;height:16px;line-height:16px;text-align:right;color:#222">7.8 MB</div>
<div class="a" style="left:90px;top:244px;width:95px;height:10px;background:#b8becc"></div>
<div class="a" style="left:3px;top:240px;width:77.59999999999991px;height:16px;line-height:16px;text-align:right;color:#8a8e98">GPU&gt;CPU</div>
<div class="a" style="left:84px;top:248px;width:5px;height:2px;background:#bfc1c7"></div>
<div class="a" style="left:105px;top:256px;width:80px;height:16px;line-height:16px;text-align:right;color:#222">3.7 MB</div>
<div class="a" style="left:120px;top:294px;width:61px;height:16px;line-height:16px;text-align:center;color:#222">2.4 MB</div>
<div class="a" style="left:180px;top:294px;width:61px;height:16px;line-height:16px;text-align:center;color:#222">4.8 MB</div>
<div class="a" style="left:241px;top:294px;width:61px;height:16px;line-height:16px;text-align:center;color:#222">7.2 MB</div>
<div class="a" style="left:301px;top:294px;width:61px;height:16px;line-height:16px;text-align:center;color:#222">9.5 MB</div>
<div class="a" style="left:90.5px;top:294px;width:40px;height:16px;line-height:16px;color:#222">0 B</div>
<div class="a" style="left:90px;top:314px;width:5px;height:5px;background:#b9bdcb"></div>
<div class="v" style="left:98.40000000000009px;top:310px;height:12px;line-height:12px;font-size:9.5px;transform:scaleX(1.0361);color:#8b8e97;transform-origin:0 50%">Transferred data</div>
<div class="v sec" style="left:12.299999999999955px;top:332px;height:21px;line-height:21px;font-size:14px;transform:scaleX(0.9259);">OFFLOADED OBJECTS:</div>
<div class="v sec" style="left:12.299999999999955px;top:370px;height:15px;line-height:15px;font-size:11px;transform:scaleX(0.9784);">TO ATTRIBUTE MEMORY OBJECTS, ENABLE THE &quot;FULL DATA</div>
<div class="v sec" style="left:12.299999999999955px;top:385px;height:15px;line-height:15px;font-size:11px;transform:scaleX(0.9780);">TRANSFER SIMULATION&quot; OPTION.</div>
<div class="v sec" style="left:12.299999999999955px;top:425px;height:21px;line-height:21px;font-size:14px;transform:scaleX(0.9249);">DATA TRANSFER HINTS</div>
<svg style="left:387px;top:432px" width="9" height="6" viewBox="0 0 9 6"><path d="M0.5 5.3 L4.5 0.8 L8.5 5.3" fill="none" stroke="#444a55" stroke-width="1.1"/></svg>
<svg style="left:13px;top:462px" width="16" height="13" viewBox="0 0 16 13"><path d="M0.9 6.9 L9.7 0.9 L11.3 8.7 L0.9 8.1 Z" fill="none" stroke="#ff0000" stroke-width="1.3" stroke-linejoin="round"/><path d="M3.7 8.4 L3.7 11.6 L8.6 11.6 L8.6 8.8" fill="none" stroke="#ff0000" stroke-width="1.3"/><path d="M11.6 1.7 L13.0 0.4 M12.4 3.7 L14.6 3.6 M12.6 6.0 L14.6 6.7" stroke="#ff2a55" stroke-width="1.0" fill="none"/></svg>
<div class="a" style="left:34px;top:458px;width:300px;height:17px;line-height:17px;font-weight:700;color:#1c1c1c;-webkit-text-stroke:0.2px #fff">Consider using USM</div>
<svg style="left:13px;top:484px" width="16" height="13" viewBox="0 0 16 13"><path d="M0.9 6.9 L9.7 0.9 L11.3 8.7 L0.9 8.1 Z" fill="none" stroke="#ff0000" stroke-width="1.3" stroke-linejoin="round"/><path d="M3.7 8.4 L3.7 11.6 L8.6 11.6 L8.6 8.8" fill="none" stroke="#ff0000" stroke-width="1.3"/><path d="M11.6 1.7 L13.0 0.4 M12.4 3.7 L14.6 3.6 M12.6 6.0 L14.6 6.7" stroke="#ff2a55" stroke-width="1.0" fill="none"/></svg>
<div class="a" style="left:34px;top:480px;width:300px;height:17px;line-height:17px;font-weight:700;color:#1c1c1c;-webkit-text-stroke:0.2px #fff">Consider using OpenMP map clause</div>
</div>
</body></html>
